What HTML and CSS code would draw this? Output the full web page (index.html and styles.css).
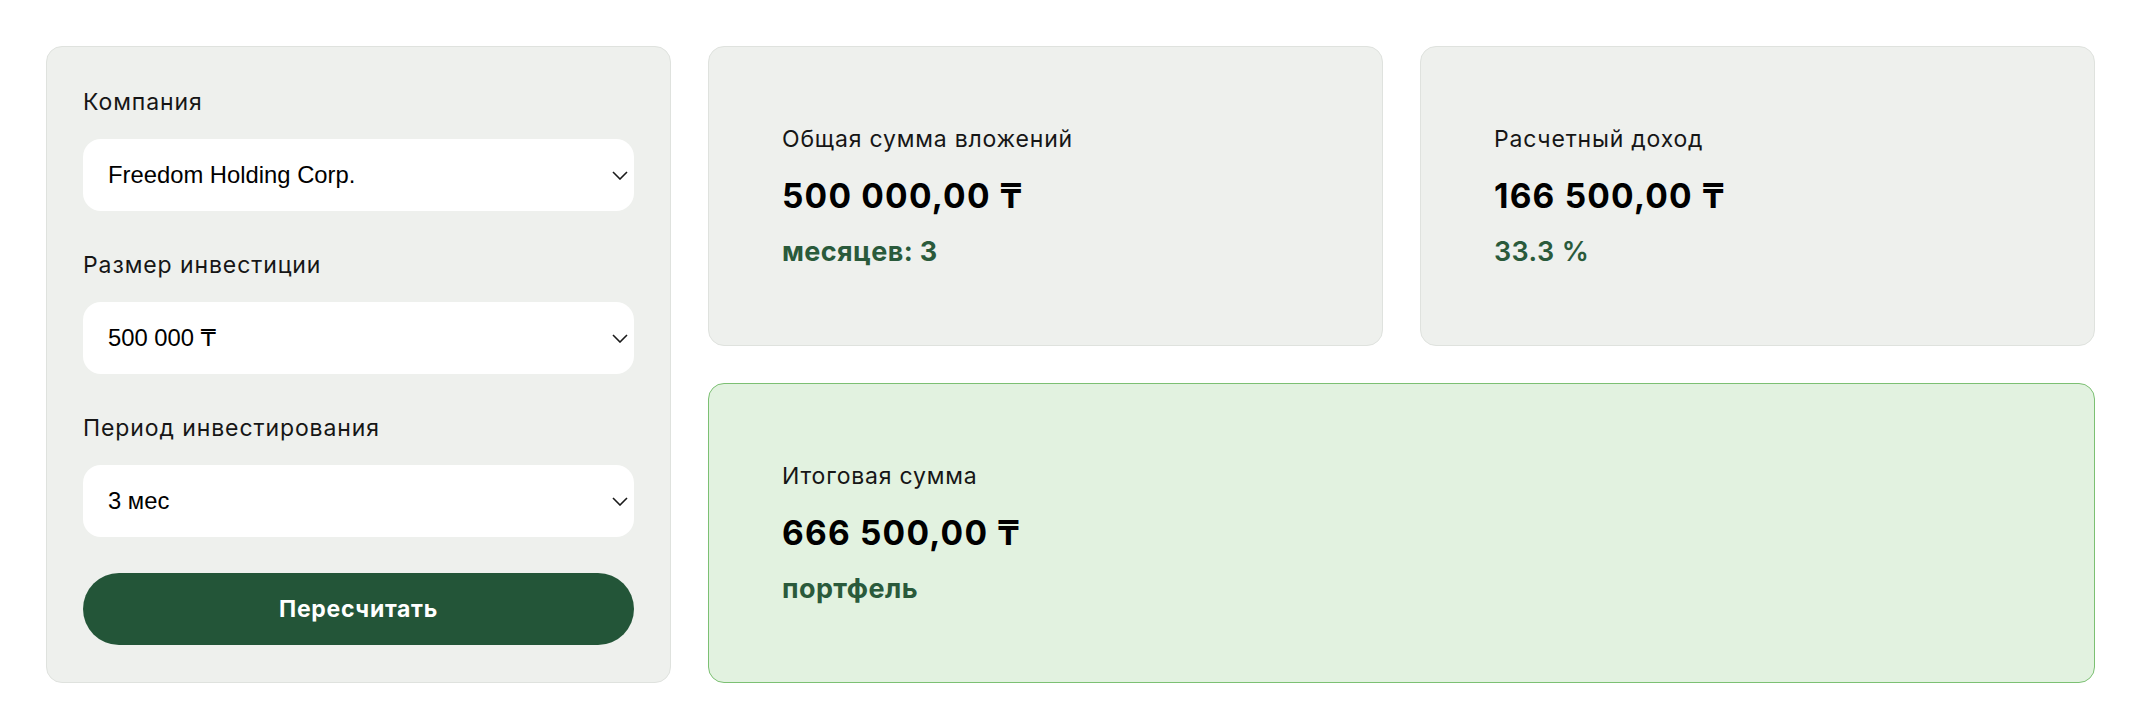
FILE: index.html
```html
<!DOCTYPE html>
<html lang="ru">
<head>
<meta charset="utf-8">
<title>Калькулятор доходности</title>
<link rel="stylesheet" href="styles.css">
</head>
<body>
<main class="calc">
  <form class="panel">
    <div class="field">
      <div class="field-label">Компания</div>
      <div class="select">
        <span class="select-value">Freedom Holding Corp.</span>
        <svg class="chevron" width="16" height="9" viewBox="0 0 16 9"><path d="M1 1l7 7 7-7" fill="none" stroke="#1a1a1a" stroke-width="1.6"/></svg>
      </div>
    </div>
    <div class="field">
      <div class="field-label">Размер инвестиции</div>
      <div class="select">
        <span class="select-value">500 000 ₸</span>
        <svg class="chevron" width="16" height="9" viewBox="0 0 16 9"><path d="M1 1l7 7 7-7" fill="none" stroke="#1a1a1a" stroke-width="1.6"/></svg>
      </div>
    </div>
    <div class="field">
      <div class="field-label">Период инвестирования</div>
      <div class="select">
        <span class="select-value">3 мес</span>
        <svg class="chevron" width="16" height="9" viewBox="0 0 16 9"><path d="M1 1l7 7 7-7" fill="none" stroke="#1a1a1a" stroke-width="1.6"/></svg>
      </div>
    </div>
    <button type="button" class="btn">Пересчитать</button>
  </form>

  <section class="card">
    <div class="card-label">Общая сумма вложений</div>
    <div class="card-amount">500 000,00 ₸</div>
    <div class="card-sub">месяцев: 3</div>
  </section>

  <section class="card">
    <div class="card-label">Расчетный доход</div>
    <div class="card-amount">166 500,00 ₸</div>
    <div class="card-sub card-sub--light">33.3 %</div>
  </section>

  <section class="card card--total">
    <div class="card-label">Итоговая сумма</div>
    <div class="card-amount">666 500,00 ₸</div>
    <div class="card-sub">портфель</div>
  </section>
</main>
</body>
</html>
```

FILE: styles.css
```css
* {
  box-sizing: border-box;
}

html, body {
  margin: 0;
  padding: 0;
  background: #ffffff;
}

body {
  font-family: Inter, "Noto Sans", "DejaVu Sans", sans-serif;
  color: #111111;
}

.calc {
  display: grid;
  grid-template-columns: 625px 1fr 1fr;
  grid-template-rows: 1fr 1fr;
  column-gap: 37px;
  row-gap: 37px;
  padding: 46px 44px 0 46px;
}

.panel {
  grid-row: 1 / span 2;
  grid-column: 1;
  display: flex;
  flex-direction: column;
  gap: 40px;
  margin: 0;
  padding: 41px 36px 37px;
  background: #eef0ed;
  border: 1px solid #dfe2de;
  border-radius: 16px;
}

.field {
  display: flex;
  flex-direction: column;
  gap: 23px;
}

.field-label {
  font-size: 23px;
  line-height: 28px;
  font-weight: 400;
  letter-spacing: 0.9px;
  color: #161616;
}

.select {
  display: flex;
  align-items: center;
  justify-content: space-between;
  height: 72px;
  padding: 0 6px 0 25px;
  background: #ffffff;
  border-radius: 18px;
}

.select-value {
  font-family: "Liberation Sans", Arial, "DejaVu Sans", sans-serif;
  font-size: 23.8px;
  line-height: 72px;
  color: #000000;
}

.chevron {
  display: block;
  flex: none;
}

.btn {
  margin-top: -4px;
  height: 72px;
  border: none;
  border-radius: 36px;
  background: #235538;
  color: #ffffff;
  font-family: Inter, "Noto Sans", "DejaVu Sans", sans-serif;
  font-size: 23px;
  font-weight: 700;
  letter-spacing: 0.7px;
  cursor: pointer;
}

.card {
  display: flex;
  flex-direction: column;
  justify-content: center;
  padding: 2px 73px 0;
  background: #eef0ed;
  border: 1px solid #dfe2de;
  border-radius: 16px;
}

.card--total {
  grid-column: 2 / span 2;
  grid-row: 2;
  background: #e2f2e0;
  border-color: #7cc073;
}

.card-label {
  font-size: 23px;
  line-height: 28px;
  font-weight: 400;
  letter-spacing: 0.8px;
  color: #161616;
  margin-bottom: 23px;
}

.card-amount {
  font-size: 33.5px;
  line-height: 40px;
  font-weight: 700;
  letter-spacing: 1.2px;
  color: #000000;
  margin-bottom: 19px;
}

.card-sub {
  font-size: 27px;
  line-height: 34px;
  font-weight: 700;
  letter-spacing: 0.4px;
  color: #2a5a3b;
}

.card-sub--light {
  font-weight: 600;
}
```
